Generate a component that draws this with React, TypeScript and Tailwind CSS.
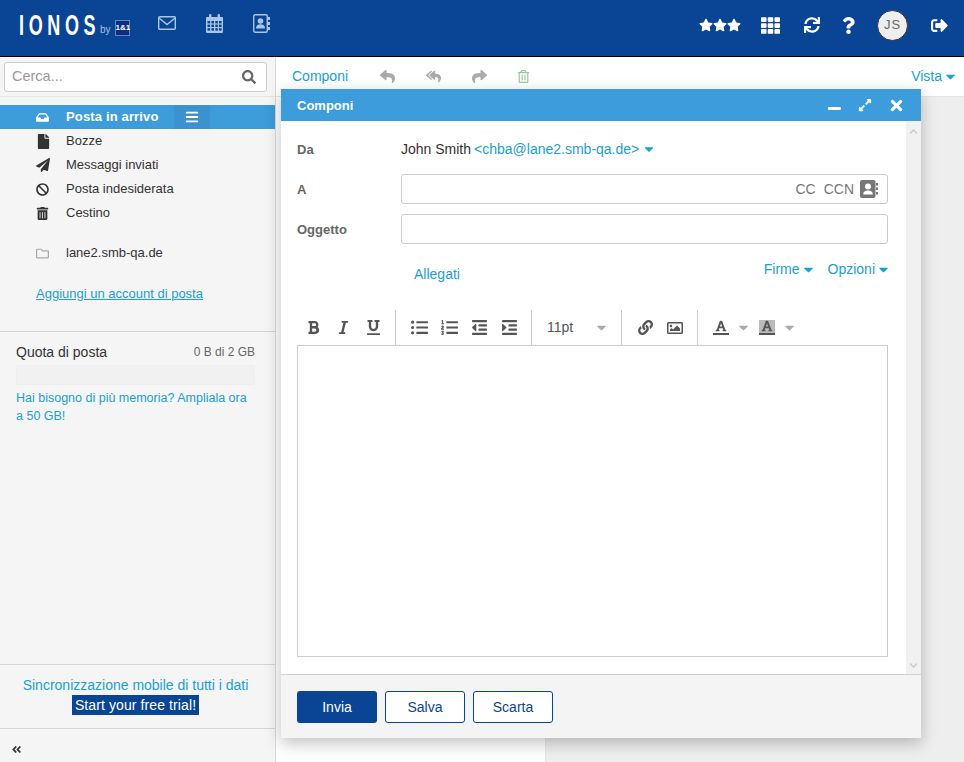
import React from "react";
import {
  FaStar, FaTh, FaSync, FaQuestion, FaSignOutAlt, FaSearch, FaInbox, FaFile, FaPaperPlane, FaBan, FaTrashAlt, FaRegFolder, FaAngleDoubleLeft, FaReply, FaReplyAll, FaShare, FaRegTrashAlt, FaMinus, FaExpandAlt, FaTimes, FaBars, FaCaretDown, FaBold, FaItalic, FaUnderline, FaListUl, FaListOl, FaOutdent, FaIndent, FaLink, FaRegImage, FaFont, FaChevronUp, FaChevronDown,
} from "react-icons/fa";

const folders = [
  { icon: <FaFile size={15} />, label: "Bozze" },
  { icon: <FaPaperPlane size={14} />, label: "Messaggi inviati" },
  { icon: <FaBan size={13} />, label: "Posta indesiderata" },
  { icon: <FaTrashAlt size={13} />, label: "Cestino" },
];

function EnvelopeIcon() {
  return (
    <svg width="18" height="14" viewBox="0 0 18 14" fill="none" stroke="currentColor" strokeWidth="1.4">
      <rect x="0.7" y="0.7" width="16.6" height="12.6" rx="1" />
      <path d="M1 2l8 6.5L17 2" />
    </svg>
  );
}

function CalendarIcon() {
  return (
    <svg width="17" height="19" viewBox="0 0 17 19" fill="currentColor">
      <path d="M1 3h15a1 1 0 0 1 1 1v14a1 1 0 0 1-1 1H1a1 1 0 0 1-1-1V4a1 1 0 0 1 1-1z" />
      <rect x="3" y="0" width="2.4" height="5" rx="1" />
      <rect x="11.6" y="0" width="2.4" height="5" rx="1" />
      <g fill="#0a4595">
        <rect x="1.5" y="7" width="2.6" height="2.4" /><rect x="5.4" y="7" width="2.6" height="2.4" /><rect x="9.3" y="7" width="2.6" height="2.4" /><rect x="13" y="7" width="2.6" height="2.4" />
        <rect x="1.5" y="10.6" width="2.6" height="2.4" /><rect x="5.4" y="10.6" width="2.6" height="2.4" /><rect x="9.3" y="10.6" width="2.6" height="2.4" /><rect x="13" y="10.6" width="2.6" height="2.4" />
        <rect x="1.5" y="14.2" width="2.6" height="2.4" /><rect x="5.4" y="14.2" width="2.6" height="2.4" /><rect x="9.3" y="14.2" width="2.6" height="2.4" /><rect x="13" y="14.2" width="2.6" height="2.4" />
      </g>
    </svg>
  );
}

function BookIcon() {
  return (
    <svg width="17" height="19" viewBox="0 0 17 19" fill="currentColor">
      <rect x="0.7" y="0.7" width="13.6" height="17.6" rx="1.5" fill="none" stroke="currentColor" strokeWidth="1.4" />
      <circle cx="7.5" cy="7" r="2.8" />
      <path d="M3 14.5c0-3 1.8-4.2 4.5-4.2s4.5 1.2 4.5 4.2z" />
      <rect x="15" y="3" width="2" height="3" /><rect x="15" y="8" width="2" height="3" /><rect x="15" y="13" width="2" height="3" />
    </svg>
  );
}

function SmallBook() {
  return (
    <svg width="18" height="18" viewBox="0 0 18 18">
      <rect x="0" y="0" width="15.5" height="18" rx="2" fill="#777" />
      <circle cx="8" cy="6.5" r="3" fill="#fff" />
      <path d="M3.2 14.5c0-3 1.8-4 4.8-4s4.8 1 4.8 4z" fill="#fff" />
      <rect x="16" y="3" width="2" height="2.5" fill="#777" /><rect x="16" y="7.5" width="2" height="2.5" fill="#777" /><rect x="16" y="12" width="2" height="2.5" fill="#777" />
    </svg>
  );
}

function Sidebar() {
  return (
    <aside className="w-[276px] shrink-0 bg-[#f5f5f5] border-r border-[#d9d9d9] flex flex-col">
      <div className="h-[40px] pl-1 pr-2 pt-[5px] border-b border-[#e5e5e5] shrink-0">
        <div className="h-[30px] bg-white border border-[#ccc] rounded-[3px] flex items-center justify-between pl-[7px] pr-[10px]">
          <span className="text-[14.5px] text-[#999]">Cerca...</span>
          <FaSearch size={14} className="text-[#666]" />
        </div>
      </div>
      <div className="pt-2">
        <div className="h-6 bg-[#3d9cdb] flex items-center text-white font-bold text-[13px]">
          <span className="w-[66px] pl-[36px] shrink-0"><FaInbox size={13} /></span>
          <span className="w-[108px] shrink-0 tracking-[0.15px]">Posta in arrivo</span>
          <span className="w-[36px] h-6 bg-[#3a92cf] flex items-center justify-center"><FaBars size={14} /></span>
        </div>
        {folders.map((f) => (
          <div key={f.label} className="h-6 flex items-center text-[13px] text-[#333]">
            <span className="w-[66px] pl-[36px] shrink-0">{f.icon}</span>
            <span>{f.label}</span>
          </div>
        ))}
        <div className="h-6 mt-4 flex items-center text-[13px] text-[#333]">
          <span className="w-[66px] pl-[36px] shrink-0 text-[#aaa]"><FaRegFolder size={13} /></span>
          <span>lane2.smb-qa.de</span>
        </div>
        <div className="pl-[36px] mt-[19px] text-[13px] leading-5 text-[#1a9fd6] underline">Aggiungi un account di posta</div>
      </div>
      <div className="mt-[27px] border-t border-[#d4d4d4] px-4 pt-[11px]">
        <div className="flex items-center justify-between h-[18px]">
          <span className="text-[14px] text-[#333]">Quota di posta</span>
          <span className="text-[12px] text-[#666] mr-[4px]">0 B di 2 GB</span>
        </div>
        <div className="h-5 mt-[4px] mr-[4px] rounded-[2px] bg-[#f1f1f1] border border-[#eee]" />
        <p className="mt-[4px] mr-[4px] text-[12.5px] leading-[18px] text-[#1a9fd6]">Hai bisogno di più memoria? Ampliala ora a 50 GB!</p>
      </div>
      <div className="flex-1" />
      <div className="h-[64px] border-t border-[#d4d4d4] text-center text-[14px] pt-[10px] pr-[4px] leading-5">
        <div className="text-[#1a9fd6]">Sincronizzazione mobile di tutti i dati</div>
        <span className="inline-block bg-[#0a4595] text-white px-[3px] tracking-[0.1px]">Start your free trial!</span>
      </div>
      <div className="h-[34px] border-t border-[#d4d4d4] flex items-center pl-[11px] pt-2 text-[#333]">
        <FaAngleDoubleLeft size={11} />
      </div>
    </aside>
  );
}

function Header() {
  return (
    <header className="h-[57px] shrink-0 bg-[#0a4595] border-b border-black flex items-center text-white">
      <div className="w-[158px] pl-[19px] flex items-center shrink-0 -mt-[6px]">
        <span className="block w-[81px] text-[29px] leading-[25px] tracking-[7.5px] font-bold origin-left scale-x-[0.62] whitespace-nowrap">IONOS</span>
        <span className="text-[10px] text-[#a9c0e0] mt-[9px]">by</span>
        <span className="ml-[4px] w-[15px] h-[16px] border border-[#5f86c4] bg-[#0b2f7e] text-white font-bold text-[8px] leading-[14px] text-center mt-[6px]">1&amp;1</span>
      </div>
      <div className="flex items-center gap-[30px] text-[#a9c6e8] -mt-[10px]">
        <EnvelopeIcon />
        <CalendarIcon />
        <BookIcon />
      </div>
      <div className="flex-1" />
      <div className="flex items-center -mt-[6px]">
        <div className="flex mr-[20px]"><FaStar size={14} /><FaStar size={14} /><FaStar size={14} /></div>
        <FaTh size={19} className="mr-[24px]" />
        <FaSync size={16} className="mr-[20px]" />
        <FaQuestion size={17} className="mr-[20px]" />
        <div className="w-[31px] h-[31px] rounded-full bg-[#eee] border border-[#333] flex items-center justify-center text-[#666] text-[13px] tracking-[1px] mr-[23px]">JS</div>
        <FaSignOutAlt size={17} className="mr-[16px]" />
      </div>
    </header>
  );
}

function Sep({ l = 7, r = 8 }: { l?: number; r?: number }) {
  return <span className="w-px h-[35px] bg-[#ccc]" style={{ marginLeft: l, marginRight: r }} />;
}

function Caret({ className }: { className: string }) {
  return (
    <span className={`w-[9px] flex justify-center shrink-0 ${className}`}>
      <FaCaretDown size={15} />
    </span>
  );
}

function Compose() {
  const link = "text-[#1a9fd6]";
  const tb = "w-[30px] flex justify-center text-[#555]";
  const label = "w-[104px] pt-[1px] font-bold text-[#666] text-[13px] shrink-0";
  return (
    <div className="absolute left-[281px] top-[89px] w-[640px] h-[649px] bg-white flex flex-col shadow-[0_5px_15px_rgba(0,0,0,0.25)] z-10">
      <div className="h-8 shrink-0 bg-[#3d9cdb] flex items-center justify-between text-white pl-[16px] pr-[16px]">
        <span className="font-bold text-[13px] pt-[1px]">Componi</span>
        <div className="flex items-center gap-[16px]">
          <FaMinus size={15} className="mt-[6px]" />
          <FaExpandAlt size={14} />
          <FaTimes size={17} />
        </div>
      </div>
      <div className="flex-1 flex min-h-0">
        <div className="flex-1 pl-[16px] pr-[18px] pt-[15px] min-w-0">
          <div className="flex items-center h-[26px] text-[14px]">
            <span className={label}>Da</span>
            <span className="text-[#333]">John Smith</span>
            <span className={`${link} ml-[3px]`}>&lt;chba@lane2.smb-qa.de&gt;</span>
            <FaCaretDown size={14} className={`${link} ml-[3px]`} />
          </div>
          <div className="flex items-center mt-[12px] h-[30px]">
            <span className={label}>A</span>
            <div className="flex-1 h-[30px] rounded-[3px] border border-[#ccc] flex items-center justify-end pr-[9px] text-[#777] text-[14px]">
              <span>CC</span>
              <span className="ml-[8px]">CCN</span>
              <span className="ml-[6px] flex"><SmallBook /></span>
            </div>
          </div>
          <div className="flex items-center mt-[10px] h-[30px]">
            <span className={label}>Oggetto</span>
            <div className="flex-1 h-[30px] rounded-[3px] border border-[#ccc]" />
          </div>
          <div className="flex justify-between mt-[15px] h-5 text-[14px] leading-5">
            <span className={`${link} ml-[117px] mt-[5px]`}>Allegati</span>
            <div className={`${link} flex items-center h-[20px]`}>
              <span>Firme</span>
              <Caret className="ml-[4px] mr-[15px]" />
              <span>Opzioni</span>
              <Caret className="ml-[4px]" />
            </div>
          </div>
          <div className="flex items-center h-[35px] mt-[31px]">
            <span className={`${tb} ml-[1px]`}><FaBold size={15} /></span>
            <span className={tb}><FaItalic size={15} /></span>
            <span className={tb}><FaUnderline size={15} /></span>
            <Sep />
            <span className={tb}><FaListUl size={17} /></span>
            <span className={tb}><FaListOl size={17} /></span>
            <span className={tb}><FaOutdent size={17} /></span>
            <span className={tb}><FaIndent size={17} /></span>
            <Sep />
            <span className="text-[14px] text-[#555] ml-[7px] w-[50px] shrink-0">11pt</span>
            <Caret className="text-[#aaa]" />
            <span className="w-[8px]" />
            <Sep />
            <span className={tb}><FaLink size={15} /></span>
            <span className={tb}><FaRegImage size={16} /></span>
            <Sep r={15} />
            <span className="w-4 flex justify-center text-[#555] border-b-2 border-[#555] pb-[1px]"><FaFont size={12} /></span>
            <Caret className="text-[#aaa] ml-[10px]" />
            <span className="w-4 ml-[11px] flex justify-center text-[#555] bg-[#bbb] border-b-2 border-[#555] pb-[1px]"><FaFont size={12} /></span>
            <Caret className="text-[#aaa] ml-[10px]" />
          </div>
          <div className="h-[312px] border border-[#ccc]" />
        </div>
        <div className="w-[15px] shrink-0 bg-[#f1f1f1] flex flex-col items-center justify-between pt-[6px] pb-[4px] text-[#c8c8c8]">
          <FaChevronUp size={9} />
          <FaChevronDown size={9} />
        </div>
      </div>
      <div className="h-[64px] shrink-0 bg-[#f4f4f4] border-t border-[#d0d0d0] flex items-center gap-2 pl-[16px] text-[14px] pt-[1px]">
        <span className="w-20 h-8 rounded-[3px] bg-[#0a4595] text-white flex items-center justify-center">Invia</span>
        <span className="w-20 h-8 rounded-[3px] bg-white border border-[#0a4595] text-[#0a4595] flex items-center justify-center">Salva</span>
        <span className="w-20 h-8 rounded-[3px] bg-white border border-[#0a4595] text-[#0a4595] flex items-center justify-center">Scarta</span>
      </div>
    </div>
  );
}

export default function App() {
  return (
    <div className="relative h-[762px] w-[964px] overflow-hidden flex flex-col bg-white text-[#333] font-['Liberation_Sans',Arial,sans-serif]">
      <Header />
      <div className="flex-1 flex min-h-0">
        <Sidebar />
        <main className="flex-1 flex flex-col min-w-0">
          <div className="h-[40px] shrink-0 border-b border-[#e5e5e5] flex items-center text-[14px] pl-4 pr-[9px]">
            <span className="text-[#1a9fd6] mr-[32px]">Componi</span>
            <FaReply size={15} className="text-[#aaa] mr-[31px]" />
            <FaReplyAll size={15} className="text-[#aaa] mr-[31px]" />
            <FaShare size={15} className="text-[#aaa] mr-[30px]" />
            <FaRegTrashAlt size={13} className="text-[#9fc79f]" />
            <span className="flex-1" />
            <span className="text-[#1a9fd6]">Vista</span>
            <Caret className="text-[#1a9fd6] ml-[4px]" />
          </div>
          <div className="flex-1 flex">
            <div className="w-[270px] border-r border-[#e5e5e5]" />
            <div className="flex-1 bg-[#eee]" />
          </div>
        </main>
      </div>
      <Compose />
    </div>
  );
}
